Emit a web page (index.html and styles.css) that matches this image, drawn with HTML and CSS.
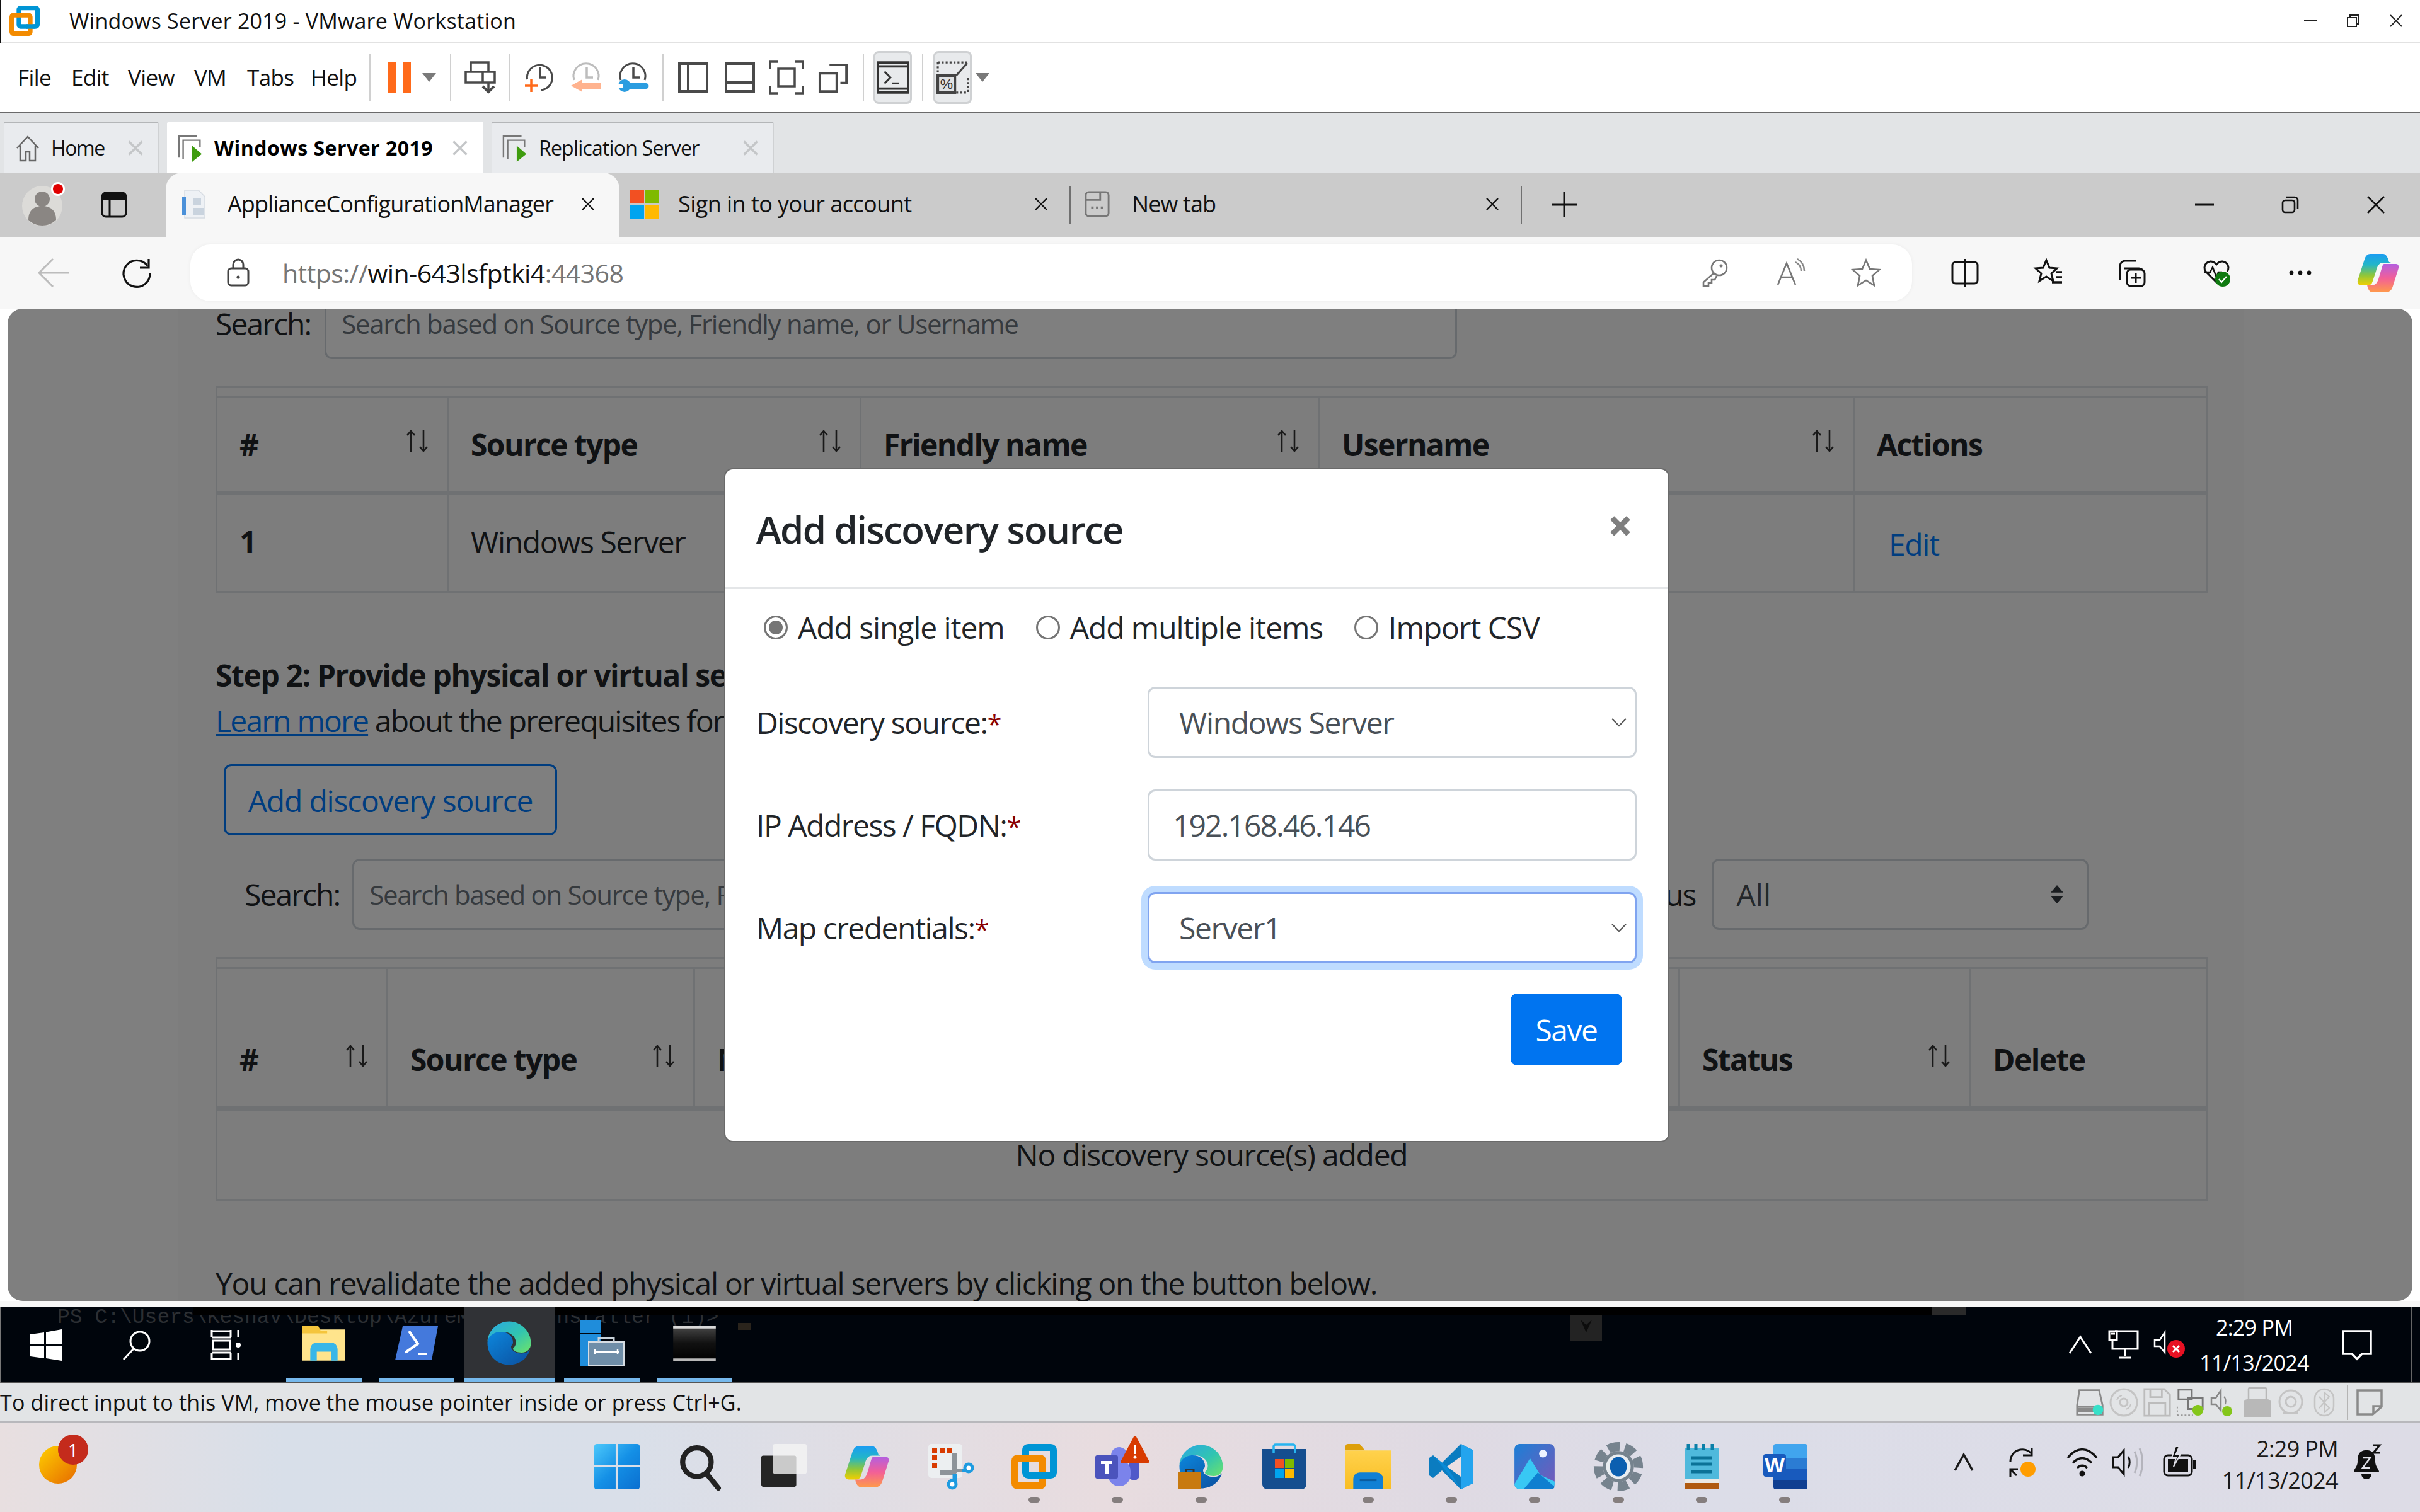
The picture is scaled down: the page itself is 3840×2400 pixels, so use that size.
FILE: index.html
```html
<!DOCTYPE html>
<html lang="en">
<head>
<meta charset="utf-8">
<title>Windows Server 2019 - VMware Workstation</title>
<link rel="stylesheet" href="styles.css">
</head>
<body>
<svg class="defs" aria-hidden="true">
  <defs>
    <linearGradient id="eTop" x1="0" y1="0" x2="1" y2="1"><stop offset="0" stop-color="#2aa7e4"/><stop offset=".55" stop-color="#31c5b0"/><stop offset="1" stop-color="#6de36a"/></linearGradient>
    <linearGradient id="eLow" x1="0" y1="0" x2="1" y2="1"><stop offset="0" stop-color="#0c86dc"/><stop offset="1" stop-color="#0b4f9e"/></linearGradient>
    <linearGradient id="cpL" x1="0" y1="0" x2="0" y2="1"><stop offset="0" stop-color="#1b9cf2"/><stop offset=".35" stop-color="#22b6c8"/><stop offset=".68" stop-color="#8fc63a"/><stop offset="1" stop-color="#f2cf00"/></linearGradient>
    <linearGradient id="cpR" x1="0" y1="0" x2="0" y2="1"><stop offset="0" stop-color="#b35fe0"/><stop offset=".5" stop-color="#f25f98"/><stop offset="1" stop-color="#ff9a4a"/></linearGradient>
    <linearGradient id="win" x1="0" y1="0" x2="1" y2="1"><stop offset="0" stop-color="#4cc8fb"/><stop offset=".5" stop-color="#1490e6"/><stop offset="1" stop-color="#0a6fd0"/></linearGradient>
    <linearGradient id="sun" x1="0" y1="0" x2="1" y2="1"><stop offset="0" stop-color="#ffd000"/><stop offset="1" stop-color="#e66a00"/></linearGradient>
    <linearGradient id="fold" x1="0" y1="0" x2="0" y2="1"><stop offset="0" stop-color="#ffd24d"/><stop offset="1" stop-color="#f9bd22"/></linearGradient>
    <linearGradient id="photo" x1="0" y1="0" x2="1" y2="1"><stop offset="0" stop-color="#1c7fd6"/><stop offset="1" stop-color="#7a58b8"/></linearGradient>
    <linearGradient id="term" x1="0" y1="0" x2="0" y2="1"><stop offset="0" stop-color="#4a4a4a"/><stop offset=".5" stop-color="#111"/><stop offset="1" stop-color="#000"/></linearGradient>
  </defs>
</svg>
<div class="app">

  <header class="vm-title">
    <svg class="ic-logo" viewBox="0 0 72 72"><rect x="22.500" y="5.500" width="44" height="44" rx="4" fill="none" stroke="#0095d5" stroke-width="11"/><rect x="5.500" y="22.500" width="44" height="44" rx="4" fill="none" stroke="#f38b00" stroke-width="11"/><path d="M40 49.500h20" stroke="#0095d5" stroke-width="11"/></svg>
    <span class="vm-title-text">Windows Server 2019 - VMware Workstation</span>
    <div class="win-ctl">
      <svg class="ic-ctl" viewBox="0 0 24 24"><path d="M2 12h20" stroke="#222" stroke-width="2"/></svg>
      <svg class="ic-ctl" viewBox="0 0 24 24"><path d="M3 7h14v14H3zM7 7V3h14v14h-4" fill="none" stroke="#222" stroke-width="2"/></svg>
      <svg class="ic-ctl" viewBox="0 0 24 24"><path d="M3 3l18 18M21 3L3 21" stroke="#222" stroke-width="2"/></svg>
    </div>
  </header>

  <nav class="vm-toolbar">
    <span>File</span><span>Edit</span><span>View</span><span>VM</span><span>Tabs</span><span>Help</span>
    <i class="tsep"></i>
    <svg class="ic-pause" viewBox="0 0 36 48"><path d="M0 0h12v48H0zM24 0h12v48H24z" fill="#ff6a1a"/></svg>
    <svg class="ic-caret" viewBox="0 0 22 14"><path d="M0 0h22L11 14z" fill="#7a7a7a"/></svg>
    <i class="tsep"></i>
    <svg class="ic-tb" viewBox="0 0 50 52"><path d="M9 2h28v15H9zM1 17h46v17H1zM28 17v17M37 34v12" fill="none" stroke="#4a4a4a" stroke-width="3.500"/><path d="M28 40l9 9 9-9" fill="none" stroke="#4a4a4a" stroke-width="4"/></svg>
    <i class="tsep"></i>
    <svg class="ic-tb" viewBox="0 0 50 52"><path d="M1.500 29A20 20 0 1 1 24 46" fill="none" stroke="#4a4a4a" stroke-width="3"/><path d="M22 10v16h10" fill="none" stroke="#4a4a4a" stroke-width="3.500"/><path d="M8 29v20M-2 39h20" stroke="#ff6a1a" stroke-width="3.500"/></svg>
    <svg class="ic-tb" viewBox="0 0 50 52"><path d="M6 30A20 20 0 1 1 44 30" fill="none" stroke="#bdbdbd" stroke-width="3"/><path d="M26 10v16h10" fill="none" stroke="#bdbdbd" stroke-width="3.500"/><path d="M1 39L19 29v6h30v9H19v5z" fill="#ffb38f"/></svg>
    <svg class="ic-tb" viewBox="0 0 50 52"><path d="M5 30A20 20 0 1 1 43 30" fill="none" stroke="#4a4a4a" stroke-width="3"/><path d="M25 10v16h10" fill="none" stroke="#4a4a4a" stroke-width="3.500"/><path d="M14 35h31a4.500 4.500 0 0 1 0 9H14z" fill="#2b9de0"/><circle cx="11" cy="39" r="10" fill="#2b9de0"/><path d="M0 36h8v6H0z" fill="#fff"/></svg>
    <i class="tsep"></i>
    <svg class="ic-lay" viewBox="0 0 48 48"><path d="M2 2h44v44H2zM16 2v44" fill="none" stroke="#4a4a4a" stroke-width="4"/></svg>
    <svg class="ic-lay" viewBox="0 0 48 48"><path d="M2 2h44v44H2zM2 32h44" fill="none" stroke="#4a4a4a" stroke-width="4"/></svg>
    <svg class="ic-layw" viewBox="0 0 56 54"><path d="M2 14V2h12M42 2h12v12M54 40v12H42M14 52H2V40" fill="none" stroke="#4a4a4a" stroke-width="3.500"/><rect x="15" y="13" width="26" height="28" fill="none" stroke="#4a4a4a" stroke-width="3.500"/></svg>
    <svg class="ic-lay" viewBox="0 0 48 50"><path d="M18 4h28v30H36" fill="none" stroke="#4a4a4a" stroke-width="4"/><path d="M2 18h28v30H2z" fill="none" stroke="#4a4a4a" stroke-width="4"/></svg>
    <i class="tsep"></i>
    <div class="tb-btn"><svg class="ic-tbin" viewBox="0 0 50 50"><path d="M2 2h46v46H2zM2 8h46M2 42h46" fill="none" stroke="#333" stroke-width="3.500"/><path d="M12 16l9 9-9 9" fill="none" stroke="#333" stroke-width="3"/><path d="M24 34h10" stroke="#333" stroke-width="3"/></svg></div>
    <i class="tsep"></i>
    <div class="tb-btn"><svg class="ic-tbin" viewBox="0 0 50 50"><path d="M2 2h46M2 2v18M48 26v22M30 48h18" fill="none" stroke="#444" stroke-width="3" stroke-dasharray="3 3"/><path d="M2 22h26v26H2z" fill="#dfe1e3" stroke="#444" stroke-width="4"/><path d="M30 22L47 3" stroke="#444" stroke-width="3"/><text x="15" y="42" class="pct">%</text></svg></div>
    <svg class="ic-caret" viewBox="0 0 22 14"><path d="M0 0h22L11 14z" fill="#7a7a7a"/></svg>
  </nav>

  <div class="vm-tabs">
    <div class="vm-tab t-home">
      <svg class="ic-tabi" viewBox="0 0 40 44"><path d="M3 22L20 4l17 18M8 18v24h9V28h6v14h9V18" fill="none" stroke="#666" stroke-width="2.500"/></svg>
      <span>Home</span><svg class="ic-tabx" viewBox="0 0 24 24"><path d="M3 3l18 18M21 3L3 21" stroke="#c4c6c8" stroke-width="3"/></svg>
    </div>
    <div class="vm-tab t-active">
      <svg class="ic-tabi" viewBox="0 0 44 44"><path d="M2 38V2h30" fill="none" stroke="#777" stroke-width="2.500"/><path d="M9 40V9h28v12" fill="none" stroke="#777" stroke-width="2.500"/><path d="M24 18l16 14-16 13z" fill="#3f9c0f"/></svg>
      <b>Windows Server 2019</b><svg class="ic-tabx" viewBox="0 0 24 24"><path d="M3 3l18 18M21 3L3 21" stroke="#c4c6c8" stroke-width="3"/></svg>
    </div>
    <div class="vm-tab t-rep">
      <svg class="ic-tabi" viewBox="0 0 44 44"><path d="M2 38V2h30" fill="none" stroke="#777" stroke-width="2.500"/><path d="M9 40V9h28v12" fill="none" stroke="#777" stroke-width="2.500"/><path d="M24 18l16 14-16 13z" fill="#3f9c0f"/></svg>
      <span>Replication Server</span><svg class="ic-tabx" viewBox="0 0 24 24"><path d="M3 3l18 18M21 3L3 21" stroke="#c4c6c8" stroke-width="3"/></svg>
    </div>
  </div>

  <div class="edge-tabs">
    <div class="avatar"><svg class="ic-avatar" viewBox="0 0 70 72"><circle cx="34" cy="38" r="32" fill="#dcdbd8"/><circle cx="34" cy="27" r="12" fill="#8a8683"/><path d="M12 60c0-16 10-22 22-22s22 6 22 22c-6 6-14 9-22 9s-16-3-22-9z" fill="#8a8683"/><circle cx="59" cy="11" r="11" fill="#fff"/><circle cx="59" cy="11" r="8" fill="#e00000"/></svg></div>
    <svg class="ic-vtabs" viewBox="0 0 42 42"><rect x="2" y="2" width="38" height="38" rx="6" fill="none" stroke="#111" stroke-width="3"/><path d="M2 14V8a6 6 0 0 1 6-6h26a6 6 0 0 1 6 6v6z" fill="#111"/><path d="M14 14v26" stroke="#111" stroke-width="3"/></svg>
    <div class="e-tab e-active">
      <svg class="ic-etab" viewBox="0 0 46 48"><path d="M8 2h22l10 10v34H8z" fill="#eef1f5" stroke="#d6dbe2" stroke-width="1.500"/><rect x="4" y="12" width="6" height="30" fill="#4a90d9"/><path d="M22 14h12v12H22zM22 30h16v12H22z" fill="#c9d3de"/></svg>
      <span class="e-label">ApplianceConfigurationManager</span>
      <svg class="ic-ex" viewBox="0 0 24 24"><path d="M3 3l18 18M21 3L3 21" stroke="#111" stroke-width="2.400"/></svg>
    </div>
    <div class="e-tab e-two">
      <svg class="ic-etab" viewBox="0 0 48 48"><path d="M0 0h23v23H0z" fill="#f25022"/><path d="M25 0h23v23H25z" fill="#7fba00"/><path d="M0 25h23v23H0z" fill="#00a4ef"/><path d="M25 25h23v23H25z" fill="#ffb900"/></svg>
      <span class="e-label">Sign in to your account</span>
      <svg class="ic-ex" viewBox="0 0 24 24"><path d="M3 3l18 18M21 3L3 21" stroke="#111" stroke-width="2.400"/></svg>
    </div>
    <i class="e-sep"></i>
    <div class="e-tab e-three">
      <svg class="ic-etab" viewBox="0 0 42 44"><rect x="2" y="2" width="38" height="40" rx="5" fill="none" stroke="#777" stroke-width="3"/><path d="M2 15h24V2" fill="none" stroke="#777" stroke-width="3"/><path d="M11 28h4M19 28h4M27 28h4" stroke="#777" stroke-width="4"/></svg>
      <span class="e-label">New tab</span>
      <svg class="ic-ex" viewBox="0 0 24 24"><path d="M3 3l18 18M21 3L3 21" stroke="#111" stroke-width="2.400"/></svg>
    </div>
    <i class="e-sep"></i>
    <svg class="ic-plus" viewBox="0 0 40 40"><path d="M20 0v40M0 20h40" stroke="#111" stroke-width="3"/></svg>
    <div class="e-ctl">
      <svg class="ic-ectl" viewBox="0 0 30 30"><path d="M0 15h30" stroke="#111" stroke-width="3"/></svg>
      <svg class="ic-ectl" viewBox="0 0 30 30"><rect x="3" y="8" width="19" height="19" rx="4" fill="none" stroke="#111" stroke-width="2.600"/><path d="M9 3h13a5 5 0 0 1 5 5v13" fill="none" stroke="#111" stroke-width="2.600"/></svg>
      <svg class="ic-ectl" viewBox="0 0 30 30"><path d="M2 2l26 26M28 2L2 28" stroke="#111" stroke-width="2.600"/></svg>
    </div>
  </div>

  <div class="edge-bar">
    <svg class="ic-back" viewBox="0 0 50 48"><path d="M2 24h48M24 2L2 24l22 22" fill="none" stroke="#bcbcbc" stroke-width="3"/></svg>
    <svg class="ic-refresh" viewBox="0 0 50 50"><path d="M42 14A21 21 0 1 0 46 26" fill="none" stroke="#111" stroke-width="3.200"/><path d="M44 3v14H30" fill="none" stroke="#111" stroke-width="3.200"/></svg>
    <div class="url-pill">
      <svg class="ic-lock" viewBox="0 0 36 44"><rect x="2" y="15" width="32" height="27" rx="5" fill="none" stroke="#444" stroke-width="3"/><path d="M10 15V9a8 8 0 0 1 16 0v6" fill="none" stroke="#444" stroke-width="3"/><circle cx="18" cy="29" r="2.600" fill="#444"/></svg>
      <span class="url"><span class="dim">https://</span>win-643lsfptki4<span class="dim">:44368</span></span>
      <div class="pill-icons">
        <svg class="ic-addr" viewBox="0 0 44 46"><circle cx="29" cy="15" r="12" fill="none" stroke="#777" stroke-width="2.600"/><circle cx="32" cy="12" r="2.500" fill="#777"/><path d="M20 24L4 38v6h8v-5h5v-5h5l3-6" fill="none" stroke="#777" stroke-width="2.600"/></svg>
        <svg class="ic-addr" viewBox="0 0 46 46"><path d="M3 42L17 8l14 34M8 30h18" fill="none" stroke="#777" stroke-width="2.600"/><path d="M31 6c6 3 9 8 9 14M34 1c7 4 11 11 11 19" fill="none" stroke="#888" stroke-width="2.500"/></svg>
        <svg class="ic-addr" viewBox="0 0 46 46"><path d="M23 3l6 14 15 1-11 10 3 15-13-8-13 8 3-15L2 18l15-1z" fill="none" stroke="#777" stroke-width="2.600"/></svg>
      </div>
    </div>
    <div class="bar-icons">
      <svg class="ic-bar" viewBox="0 0 46 46"><rect x="3" y="6" width="40" height="34" rx="5" fill="none" stroke="#111" stroke-width="3"/><path d="M23 1v44" stroke="#111" stroke-width="3"/></svg>
      <svg class="ic-bar" viewBox="0 0 46 46"><path d="M19 3l5 12 12 1-9 8 3 12-11-7-11 7 3-12-9-8 12-1z" fill="none" stroke="#111" stroke-width="3"/><path d="M34 22h10M34 30h10M28 38h16" stroke="#111" stroke-width="3.400"/></svg>
      <svg class="ic-bar" viewBox="0 0 46 46"><path d="M3 34V12a8 8 0 0 1 8-8h18" fill="none" stroke="#111" stroke-width="3"/><path d="M9 16h24a8 8 0 0 1 8 8" fill="none" stroke="#111" stroke-width="3"/><rect x="14" y="18" width="28" height="26" rx="6" fill="#f7f7f7" stroke="#111" stroke-width="3"/><path d="M28 23v16M20 31h16" stroke="#111" stroke-width="3"/></svg>
      <svg class="ic-bar" viewBox="0 0 46 46"><path d="M23 38L6 21a10 10 0 0 1 14-14l3 3 3-3a10 10 0 0 1 14 14" fill="none" stroke="#111" stroke-width="3"/><path d="M3 22h10l4-8 6 16 3-8h6" fill="none" stroke="#111" stroke-width="2.400"/><circle cx="33" cy="33" r="12" fill="#0f7a10"/><path d="M27 33l4 5 8-9" fill="none" stroke="#fff" stroke-width="2.400"/></svg>
      <svg class="ic-bar" viewBox="0 0 46 46"><circle cx="9" cy="23" r="3.400" fill="#111"/><circle cx="23" cy="23" r="3.400" fill="#111"/><circle cx="37" cy="23" r="3.400" fill="#111"/></svg>
      <svg class="ic-copilot" viewBox="0 0 72 67"><path d="M22 1H44c5 0 8 6 10 14 2 0 3 1 3 1H44C37 16 34 22 32 30l-6 18c-1 4-4 6-8 6H7c-5 0-7-4-6-8L13 9C15 4 18 1 22 1z" fill="url(#cpL)"/><path d="M46 18h20c3 0 5 3 4 7L60 57c-2 6-6 9-11 9H26c-5 0-8-6-9-12 3 0 6 0 8 0 6 0 9-4 11-10l6-20c1-4 2-6 4-6z" fill="url(#cpR)"/></svg>
    </div>
  </div>

  <main class="web">
    <div class="page">
      <div class="search-row">
        <label>Search:</label>
        <div class="fake-input w-a">Search based on Source type, Friendly name, or Username</div>
      </div>

      <div class="tw">
        <table class="dt dt-a">
          <colgroup><col class="a1"><col class="a2"><col class="a3"><col class="a4"><col class="a5"></colgroup>
          <thead><tr>
            <th><div class="thc"><span>#</span><svg class="ic-sort" viewBox="0 0 40 36"><path d="M9 35V3M3 9l6-7 6 7M29 1v32M23 27l6 7 6-7" fill="none" stroke="#333" stroke-width="2.600"/></svg></div></th>
            <th><div class="thc"><span>Source type</span><svg class="ic-sort" viewBox="0 0 40 36"><path d="M9 35V3M3 9l6-7 6 7M29 1v32M23 27l6 7 6-7" fill="none" stroke="#333" stroke-width="2.600"/></svg></div></th>
            <th><div class="thc"><span>Friendly name</span><svg class="ic-sort" viewBox="0 0 40 36"><path d="M9 35V3M3 9l6-7 6 7M29 1v32M23 27l6 7 6-7" fill="none" stroke="#333" stroke-width="2.600"/></svg></div></th>
            <th><div class="thc"><span>Username</span><svg class="ic-sort" viewBox="0 0 40 36"><path d="M9 35V3M3 9l6-7 6 7M29 1v32M23 27l6 7 6-7" fill="none" stroke="#333" stroke-width="2.600"/></svg></div></th>
            <th>Actions</th>
          </tr></thead>
          <tbody><tr><td><b>1</b></td><td>Windows Server</td><td></td><td></td><td><a class="edit" href="#">Edit</a></td></tr></tbody>
        </table>
      </div>

      <h2 class="step">Step 2: Provide physical or virtual server details</h2>
      <p class="learn"><a href="#">Learn more</a> about the prerequisites for adding discovery sources</p>
      <button class="btn-outline">Add discovery source</button>

      <div class="search-row row-b">
        <label>Search:</label>
        <div class="fake-input w-b">Search based on Source type, Friendly name</div>
        <label class="lb-status">Status</label>
        <div class="fake-input w-c"><span>All</span><svg class="ic-updown" viewBox="0 0 24 32"><path d="M12 0l11 13H1zM12 32L1 19h22z" fill="#343a40"/></svg></div>
      </div>

      <div class="tw">
        <table class="dt dt-b">
          <colgroup><col class="b1"><col class="b2"><col class="b3"><col class="b4"><col class="b5"><col class="b6"></colgroup>
          <thead><tr>
            <th><div class="thc"><span>#</span><svg class="ic-sort" viewBox="0 0 40 36"><path d="M9 35V3M3 9l6-7 6 7M29 1v32M23 27l6 7 6-7" fill="none" stroke="#333" stroke-width="2.600"/></svg></div></th>
            <th><div class="thc"><span>Source type</span><svg class="ic-sort" viewBox="0 0 40 36"><path d="M9 35V3M3 9l6-7 6 7M29 1v32M23 27l6 7 6-7" fill="none" stroke="#333" stroke-width="2.600"/></svg></div></th>
            <th><div class="thc"><span>Map</span></div></th>
            <th></th>
            <th><div class="thc"><span>Status</span><svg class="ic-sort" viewBox="0 0 40 36"><path d="M9 35V3M3 9l6-7 6 7M29 1v32M23 27l6 7 6-7" fill="none" stroke="#333" stroke-width="2.600"/></svg></div></th>
            <th>Delete</th>
          </tr></thead>
          <tbody><tr><td colspan="6" class="empty">No discovery source(s) added</td></tr></tbody>
        </table>
      </div>

      <p class="reval">You can revalidate the added physical or virtual servers by clicking on the button below.</p>
    </div>

    <div class="backdrop"></div>

    <section class="modal">
      <div class="m-head">
        <h5>Add discovery source</h5>
        <svg class="ic-close" viewBox="0 0 24 24"><path d="M3 3l18 18M21 3L3 21" stroke="#7f7f7f" stroke-width="6"/></svg>
      </div>
      <div class="m-body">
        <div class="radios">
          <span class="radio on"></span><span class="r-l">Add single item</span>
          <span class="radio"></span><span class="r-l">Add multiple items</span>
          <span class="radio"></span><span class="r-l">Import CSV</span>
        </div>
        <div class="f-row"><span class="f-lab">Discovery source:<em>*</em></span><div class="f-ctl sel">Windows Server<svg class="ic-chev" viewBox="0 0 24 14"><path d="M1 1l11 11L23 1" fill="none" stroke="#555" stroke-width="2"/></svg></div></div>
        <div class="f-row"><span class="f-lab">IP Address / FQDN:<em>*</em></span><div class="f-ctl inp">192.168.46.146</div></div>
        <div class="f-row"><span class="f-lab">Map credentials:<em>*</em></span><div class="f-ctl sel focus">Server1<svg class="ic-chev" viewBox="0 0 24 14"><path d="M1 1l11 11L23 1" fill="none" stroke="#555" stroke-width="2"/></svg></div></div>
        <div class="m-foot"><button class="btn-save">Save</button></div>
      </div>
    </section>
  </main>

  <div class="gap-band"></div>

  <div class="vm-taskbar">
    <div class="ghost">PS C:\Users\Keshav\Desktop\AzureMigrateInstaller (1)&gt;</div>
    <i class="vt-band"></i>
    <i class="ghost-cur"></i>
    <div class="vt-scroll"><svg class="ic-sc" viewBox="0 0 20 20"><path d="M1 0l9 8 9-8-9 20z" fill="#0c0c0c"/></svg></div>
    <i class="vt-top"></i>
    <i class="vt-edge"></i>
    <svg class="vt-win" viewBox="0 0 50 50"><path d="M0 8l22-3v19H0zM25 4.500L50 0v24H25zM0 27h22v19L0 43zM25 27h25v23l-25-4z" fill="#fff"/></svg>
    <svg class="vt-search" viewBox="0 0 48 48"><circle cx="29" cy="18" r="15" fill="none" stroke="#fff" stroke-width="3"/><path d="M19 30L3 47" stroke="#fff" stroke-width="3"/></svg>
    <svg class="vt-view" viewBox="0 0 48 48"><path d="M0 2h30M0 12h30M0 36h30M0 46h30M0 36v12M30 36v12M0 0v12M30 0v12" stroke="#fff" stroke-width="3" fill="none"/><rect x="1.500" y="17" width="27" height="14" fill="none" stroke="#fff" stroke-width="3"/><path d="M42 0v12M42 36v12" stroke="#fff" stroke-width="3"/><circle cx="42" cy="24" r="4" fill="#fff"/></svg>
    <div class="vt-app"><svg class="ic-vt" viewBox="0 0 66 54"><path d="M0 6h66v48H0z" fill="#ffe48c"/><path d="M0 0h24l4 8h10v4H0z" fill="#f5c53c"/><path d="M12 54V36a10 10 0 0 1 10-10h22a10 10 0 0 1 10 10v18H44V40H22v14z" fill="#38b6e8"/></svg></div>
    <div class="vt-app"><svg class="ic-vt" viewBox="0 0 68 54"><path d="M12 0h56L58 54H0z" fill="#4479dc"/><path d="M22 8l14 20-20 14" fill="none" stroke="#fff" stroke-width="4"/><path d="M36 42h14v4H36z" fill="#fff"/></svg></div>
    <div class="vt-app vt-on"><svg class="ic-edge" viewBox="0 0 48 48"><path d="M24 1C36 1 47 11 47 24c0 6-4 10-10 10-5 0-9-2-9-4 0-1 3-2 3-7 0-6-6-11-14-11C9 12 3 17 1 22 2 10 12 1 24 1z" fill="url(#eTop)"/><path d="M1 24c0-7 7-12 14-12 8 0 13 5 13 11 0 3-2 3-2 5 0 4 6 7 11 7 4 0 7-2 9-4-3 10-12 16-22 16C11 47 1 37 1 24z" fill="url(#eLow)"/></svg></div>
    <div class="vt-app"><svg class="ic-vt ic-sm" viewBox="0 0 70 72"><path d="M0 0h34v20H0zM0 22h34v50H0z" fill="#1f8ddb"/><rect x="14" y="34" width="56" height="38" fill="#6f8ea8" stroke="#d6dde3" stroke-width="2"/><path d="M30 34v-6h24v6" fill="none" stroke="#c8d2da" stroke-width="3"/><path d="M22 50h40M24 46v8M60 46v8" stroke="#fff" stroke-width="2.500"/></svg></div>
    <div class="vt-app"><svg class="ic-vt" viewBox="0 0 70 58"><rect width="70" height="58" fill="url(#term)"/><path d="M0 0h70v5H0z" fill="#d8d8d8"/><path d="M0 54h70v4H0z" fill="#b8b8b8"/></svg></div>
    <div class="vt-tray">
      <svg class="ic-vcaret" viewBox="0 0 38 30"><path d="M2 28L19 2l17 26" fill="none" stroke="#fff" stroke-width="3"/></svg>
      <svg class="ic-vnet" viewBox="0 0 48 48"><path d="M10 2h36v28H6V14" fill="none" stroke="#fff" stroke-width="3"/><path d="M1 2h12v14H1z" fill="#000" stroke="#fff" stroke-width="3"/><path d="M4 6h6" stroke="#fff" stroke-width="3"/><path d="M26 30v12M16 44h20" stroke="#fff" stroke-width="3"/></svg>
      <svg class="ic-vsnd" viewBox="0 0 50 48"><path d="M2 16h8L18 4v32l-8-10H2z" fill="none" stroke="#fff" stroke-width="2.500"/><circle cx="36" cy="30" r="14" fill="#e81123"/><path d="M31 25l10 10M41 25L31 35" stroke="#fff" stroke-width="3"/></svg>
      <div class="clock clock-w"><span>2:29 PM</span><span>11/13/2024</span></div>
      <svg class="ic-vnote" viewBox="0 0 48 48"><path d="M2 2h44v36H32l-8 8-8-8H2z" fill="none" stroke="#fff" stroke-width="3.500"/></svg>
    </div>
  </div>

  <footer class="vm-status">
    <span class="status-text">To direct input to this VM, move the mouse pointer inside or press Ctrl+G.</span>
    <div class="status-icons">
      <svg class="ic-st" viewBox="0 0 50 46"><path d="M6 2h34l6 26v16H2V28z" fill="none" stroke="#8a8a8a" stroke-width="3"/><path d="M2 30h44" stroke="#8a8a8a" stroke-width="3"/><path d="M4 32h28v8H4z" fill="#8a8a8a"/><circle cx="38" cy="36" r="9" fill="#37e0c8"/></svg>
      <svg class="ic-st" viewBox="0 0 46 46"><circle cx="23" cy="23" r="21" fill="none" stroke="#c4c4c4" stroke-width="3"/><circle cx="23" cy="23" r="6" fill="none" stroke="#c4c4c4" stroke-width="3"/><path d="M12 20a11 11 0 0 1 8-8M34 26a11 11 0 0 1-8 8" fill="none" stroke="#c4c4c4" stroke-width="2"/></svg>
      <svg class="ic-st" viewBox="0 0 48 50"><path d="M2 2h34l10 10v36H2z" fill="none" stroke="#bcbcbc" stroke-width="3"/><path d="M12 2v14h20V2M10 48V26h28v22" fill="none" stroke="#bcbcbc" stroke-width="3"/></svg>
      <svg class="ic-st" viewBox="0 0 48 46"><path d="M4 2h22v16H4zM20 16h24v18H20z" fill="#e2e4e6" stroke="#777" stroke-width="3"/><path d="M2 44h26M2 30v14" stroke="#999" stroke-width="2" stroke-dasharray="3 3"/><circle cx="36" cy="36" r="9" fill="#84c61a"/></svg>
      <svg class="ic-st" viewBox="0 0 44 46"><path d="M2 16h7l8-12v32l-8-10H2z" fill="none" stroke="#888" stroke-width="2.500"/><path d="M22 14c3 3 3 8 2 12" fill="none" stroke="#888" stroke-width="2"/><circle cx="27" cy="37" r="8" fill="#84c61a"/></svg>
      <svg class="ic-st" viewBox="0 0 44 46"><rect x="8" y="0" width="28" height="22" rx="2" fill="none" stroke="#b8b8b8" stroke-width="2.500"/><path d="M0 24a6 6 0 0 1 6-6h32a6 6 0 0 1 6 6v22H0z" fill="#b8b8b8"/></svg>
      <svg class="ic-st" viewBox="0 0 40 46"><circle cx="20" cy="22" r="18" fill="none" stroke="#c4c4c4" stroke-width="3"/><circle cx="20" cy="22" r="8" fill="none" stroke="#c4c4c4" stroke-width="3"/><path d="M8 40h24" stroke="#c4c4c4" stroke-width="3"/></svg>
      <svg class="ic-st" viewBox="0 0 34 46"><rect x="2" y="2" width="30" height="42" rx="15" fill="none" stroke="#c4c4c4" stroke-width="2.500"/><path d="M9 14l16 18-8 7V7l8 7L9 32" fill="none" stroke="#c4c4c4" stroke-width="2"/></svg>
      <i class="st-sep"></i>
      <svg class="ic-note" viewBox="0 0 42 42"><path d="M2 2h38v26L26 40H2z" fill="none" stroke="#8a8a8a" stroke-width="3.500"/><path d="M40 27H27v13" fill="none" stroke="#8a8a8a" stroke-width="3.500"/></svg>
    </div>
  </footer>

  <div class="host-taskbar">
    <div class="weather"><svg class="ic-sun" viewBox="0 0 80 82"><circle cx="30" cy="52" r="30" fill="url(#sun)"/></svg><span class="badge">1</span></div>
    <div class="h-app"><svg class="ic-host" viewBox="0 0 70 70"><path d="M0 4a4 4 0 0 1 4-4h29v33H0zM36 0h30a4 4 0 0 1 4 4v29H36zM0 36h33v34H4a4 4 0 0 1-4-4zM36 36h34v30a4 4 0 0 1-4 4H36z" fill="url(#win)"/></svg></div>
    <div class="h-app"><svg class="ic-host" viewBox="0 0 70 70"><circle cx="29" cy="28" r="22" fill="none" stroke="#222" stroke-width="8"/><path d="M44 46l18 22" stroke="#222" stroke-width="8" stroke-linecap="round"/></svg></div>
    <div class="h-app"><svg class="ic-host" viewBox="0 0 70 70"><rect x="0" y="18" width="54" height="48" rx="3" fill="#252525"/><rect x="18" y="0" width="52" height="46" rx="3" fill="#f4f4f4" fill-opacity=".8"/></svg></div>
    <div class="h-app"><svg class="ic-host" viewBox="0 0 72 67"><path d="M22 1H44c5 0 8 6 10 14 2 0 3 1 3 1H44C37 16 34 22 32 30l-6 18c-1 4-4 6-8 6H7c-5 0-7-4-6-8L13 9C15 4 18 1 22 1z" fill="url(#cpL)"/><path d="M46 18h20c3 0 5 3 4 7L60 57c-2 6-6 9-11 9H26c-5 0-8-6-9-12 3 0 6 0 8 0 6 0 9-4 11-10l6-20c1-4 2-6 4-6z" fill="url(#cpR)"/></svg></div>
    <div class="h-app"><svg class="ic-host" viewBox="0 0 72 72"><rect width="54" height="54" rx="5" fill="#eceff1"/><path d="M6 6h8v9H6zM18 6h8v9h-8zM30 6h8v9h-8zM6 18h8v8H6zM6 30h8v8H6z" fill="#d83b01"/><path d="M42 14v28a4 4 0 0 1-4 4H18" fill="none" stroke="#8d949a" stroke-width="8"/><path d="M38 42h22" stroke="#8d949a" stroke-width="6"/><path d="M42 48v12" stroke="#1e9be0" stroke-width="7"/><path d="M54 42h6" stroke="#1e9be0" stroke-width="6"/><circle cx="64" cy="38" r="6" fill="#fff" stroke="#1e9be0" stroke-width="5"/><circle cx="38" cy="64" r="6" fill="#fff" stroke="#1e9be0" stroke-width="5"/></svg></div>
    <div class="h-app dot"><svg class="ic-host" viewBox="0 0 72 72"><rect x="22.500" y="5.500" width="44" height="44" rx="4" fill="none" stroke="#0095d5" stroke-width="11"/><rect x="5.500" y="22.500" width="44" height="44" rx="4" fill="none" stroke="#f38b00" stroke-width="11"/><path d="M40 49.500h20" stroke="#0095d5" stroke-width="11"/></svg></div>
    <div class="h-app dot"><svg class="ic-teams" viewBox="0 0 86 80"><rect x="53" y="24" width="17" height="47" rx="8.500" fill="#5059c9"/><circle cx="38" cy="31" r="13" fill="#7b83eb"/><rect x="20" y="38" width="36" height="42" rx="18" fill="#7b83eb"/><rect y="31" width="36" height="37" rx="3" fill="#4b53bc"/><path d="M9 40h18v5h-6v15h-6V45H9z" fill="#fff"/><path d="M63 3L83 41H43z" fill="#d83b01" stroke="#d83b01" stroke-width="5" stroke-linejoin="round"/><path d="M61 14h4v15h-4z" fill="#fff"/><circle cx="63" cy="34" r="2.500" fill="#fff"/></svg></div>
    <div class="h-app dot"><svg class="ic-host" viewBox="0 0 48 48"><path d="M24 1C36 1 47 11 47 24c0 6-4 10-10 10-5 0-9-2-9-4 0-1 3-2 3-7 0-6-6-11-14-11C9 12 3 17 1 22 2 10 12 1 24 1z" fill="url(#eTop)"/><path d="M1 24c0-7 7-12 14-12 8 0 13 5 13 11 0 3-2 3-2 5 0 4 6 7 11 7 4 0 7-2 9-4-3 10-12 16-22 16C11 47 1 37 1 24z" fill="url(#eLow)"/><path d="M0 30h24v18H0z" fill="#c87a10"/><path d="M8 30v-3h8v3" fill="none" stroke="#333" stroke-width="2"/></svg></div>
    <div class="h-app"><svg class="ic-host" viewBox="0 0 70 72"><path d="M0 8h70v56a8 8 0 0 1-8 8H8a8 8 0 0 1-8-8z" fill="#154e8f"/><path d="M18 14V4a3 3 0 0 1 3-3h28a3 3 0 0 1 3 3v10" fill="none" stroke="#27b4ef" stroke-width="3.500"/><path d="M20 24h14v14H20z" fill="#f25022"/><path d="M36 24h14v14H36z" fill="#7fba00"/><path d="M20 40h14v14H20z" fill="#00a4ef"/><path d="M36 40h14v14H36z" fill="#ffb900"/></svg></div>
    <div class="h-app dot"><svg class="ic-host" viewBox="0 0 70 70"><path d="M0 4a4 4 0 0 1 4-4h18l8 10H0z" fill="#dd9f0a"/><path d="M0 10h70v60H0z" fill="url(#fold)"/><path d="M12 70V54a10 10 0 0 1 10-10h26a10 10 0 0 1 10 10v16z" fill="#1180d4"/><path d="M22 56h26" stroke="#0b5ca0" stroke-width="3"/></svg></div>
    <div class="h-app dot"><svg class="ic-host" viewBox="0 0 70 72"><path d="M50 0l20 10v52L50 72 20 42 6 54 0 50V22l6-4 14 12z" fill="#0b7cc0"/><path d="M50 0l20 10v52L50 72z" fill="#23a4ee"/><path d="M50 20v32L28 36z" fill="#eadfe2"/><path d="M6 18l44 54-22-36z" fill="#0a8ad6"/></svg></div>
    <div class="h-app dot"><svg class="ic-host" viewBox="0 0 62 70"><rect width="62" height="70" rx="8" fill="url(#photo)"/><circle cx="44" cy="15" r="6" fill="#eef4ff"/><path d="M0 62l24-40 16 26 22 10v4a8 8 0 0 1-8 8H8a8 8 0 0 1-8-8z" fill="#38c8f4"/><path d="M14 70l22-26 26 22a6 6 0 0 1-6 4z" fill="#0f7fd0"/></svg></div>
    <div class="h-app dot"><svg class="ic-host" viewBox="0 0 70 70"><path d="M35 4a31 31 0 1 0 .001 0z" fill="none" stroke="#76838e" stroke-width="14" stroke-dasharray="16 8"/><circle cx="35" cy="35" r="24" fill="#76838e"/><circle cx="35" cy="35" r="19" fill="#e9edf1"/><ellipse cx="35" cy="35" rx="13" ry="15" fill="#0b5fb0"/></svg></div>
    <div class="h-app dot"><svg class="ic-host" viewBox="0 0 54 72"><path d="M0 6h54v54H0z" fill="#4fb9dc"/><path d="M0 56h54v6H0z" fill="#ece9e4"/><path d="M0 62h54v10H0z" fill="#b05a10"/><path d="M6 0v10M18 0v10M30 0v10M44 0v10" stroke="#0b7fa8" stroke-width="5"/><path d="M10 22h34M10 32h34M10 44h34" stroke="#0b7297" stroke-width="5" /></svg></div>
    <div class="h-app dot"><svg class="ic-host" viewBox="0 0 70 72"><path d="M16 4a4 4 0 0 1 4-4h46a4 4 0 0 1 4 4v18H16z" fill="#41a5ee"/><path d="M16 22h54v18H16z" fill="#2b7cd3"/><path d="M16 40h54v18H16z" fill="#185abd"/><path d="M16 58h54v10a4 4 0 0 1-4 4H20a4 4 0 0 1-4-4z" fill="#103f91"/><rect y="16" width="36" height="36" rx="4" fill="#185abd"/><text x="18" y="45" class="w-text">W</text></svg></div>
    <div class="h-tray">
      <svg class="ic-hcaret" viewBox="0 0 32 30"><path d="M2 28L16 3l14 25" fill="none" stroke="#1a1a1a" stroke-width="3.500"/></svg>
      <svg class="ic-hsync" viewBox="0 0 48 50"><path d="M6 24a19 19 0 0 1 34-12M40 2v12H26" fill="none" stroke="#111" stroke-width="3"/><path d="M6 48V36h12M6 36l10 10" fill="none" stroke="#111" stroke-width="3"/><circle cx="34" cy="36" r="12" fill="#ff9d00"/></svg>
      <svg class="ic-hwifi" viewBox="0 0 50 46"><path d="M2 16c14-18 32-18 46 0M10 24c10-10 20-10 30 0M17 32c5-5 11-5 16 0" fill="none" stroke="#111" stroke-width="3.500"/><circle cx="25" cy="41" r="4.500" fill="#111"/></svg>
      <svg class="ic-hsnd" viewBox="0 0 50 46"><path d="M2 15h8l9-11v38l-9-11H2z" fill="none" stroke="#111" stroke-width="3"/><path d="M26 14c3 5 3 13 0 18" fill="none" stroke="#111" stroke-width="3"/><path d="M36 6c5 10 5 24 0 34M44 1c6 12 6 32 0 44" fill="none" stroke="#b4b4bc" stroke-width="3"/></svg>
      <svg class="ic-hbat" viewBox="0 0 54 50"><rect x="2" y="14" width="44" height="32" rx="6" fill="none" stroke="#111" stroke-width="3"/><path d="M8 20h32v20H8z" fill="#111"/><path d="M48 22h5v14h-5z" fill="#111"/><path d="M20 0l-6 18h7l-4 14 11-20h-7l5-12z" fill="#111" stroke="#e0e0e8" stroke-width="2"/></svg>
      <div class="clock clock-d"><span>2:29 PM</span><span>11/13/2024</span></div>
      <svg class="ic-hbell" viewBox="0 0 44 62"><path d="M22 12C10 12 8 20 8 30c0 8-6 12-6 16h40c0-4-6-8-6-16 0-10-2-18-14-18z" fill="#111"/><path d="M14 50a8 8 0 0 0 16 0z" fill="#111"/><path d="M16 24h12L16 40h12" fill="none" stroke="#e0e0e8" stroke-width="2.500"/><path d="M33 4h10L33 16h10" fill="none" stroke="#111" stroke-width="3"/></svg>
    </div>
  </div>
</div>
</body>
</html>
```
FILE: styles.css
```css
* { box-sizing: border-box; }
html, body { margin: 0; padding: 0; background: #fff; }
body { font-family: "Open Sans", "Noto Sans", sans-serif; color: #111; }
.defs { position: absolute; width: 0; height: 0; }
.app { width: 3840px; height: 2400px; display: flex; flex-direction: column; overflow: hidden; }
svg { display: block; flex: none; overflow: visible; }
i { display: block; font-style: normal; }

/* VMware title */
.vm-title { height: 69px; display: flex; align-items: center; padding-left: 13px; border-left: 2px solid #111; border-bottom: 2px solid #e2e2e2; background: #fff; }
.ic-logo { width: 48px; height: 48px; }
.vm-title-text { margin-left: 47px; font-size: 34px; letter-spacing: .2px; color: #111; }
.win-ctl { margin-left: auto; display: flex; align-items: center; gap: 44px; padding-right: 26px; }
.ic-ctl { width: 24px; height: 24px; }

/* VMware toolbar */
.vm-toolbar { height: 110px; display: grid; grid-template-columns: 85px 90px 105px 84px 101px 93px 30px 54px 44px 24px 70px 27px 70px 75px 71px 25px 74px 70px 78px 71px 17px 77px 18px 67px auto; justify-items: start; align-items: center; padding-left: 28px; border-bottom: 2px solid #6a6a6a; background: #fff; font-size: 35px; letter-spacing: -.6px; }
.tsep { width: 2px; height: 76px; background: #d0d0d0; }
.ic-pause { width: 36px; height: 48px; }
.ic-caret { width: 22px; height: 14px; }
.ic-tb { width: 50px; height: 52px; }
.ic-lay { width: 48px; height: 48px; }
.ic-layw { width: 56px; height: 54px; }
.tb-btn { width: 61px; height: 84px; display: flex; align-items: center; justify-content: center; background: #e8eaec; border: 3px solid #cfd1d3; border-radius: 8px; }
.ic-tbin { width: 54px; height: 52px; }
.pct { font: 22px "Liberation Sans", sans-serif; fill: #333; text-anchor: middle; }

/* VMware tabs */
.vm-tabs { height: 96px; display: flex; align-items: flex-end; padding-left: 6px; gap: 13px; background: #e2e4e6; font-size: 32px; letter-spacing: -.8px; }
.vm-tab { height: 81px; display: flex; align-items: center; padding: 0 22px 0 16px; background: #e9ebee; border-top: 2px solid #b4b6b8; border-left: 1px solid #cfd1d3; border-right: 1px solid #cfd1d3; border-radius: 4px 4px 0 0; }
.t-home { width: 246px; }
.t-active { width: 502px; background: #fff; border-color: #fff; }
.t-rep { width: 448px; }
.ic-tabi { width: 42px; height: 44px; margin-right: 16px; }
.t-active b { font-weight: 700; color: #000; letter-spacing: .5px; }
.t-home span { letter-spacing: -1.4px; }
.ic-tabx { width: 28px; height: 28px; margin-left: auto; }

/* Edge tabs */
.edge-tabs { height: 102px; display: flex; align-items: center; background: #cbcbcb; padding-left: 33px; font-size: 36px; letter-spacing: -.9px; }
.ic-avatar { width: 70px; height: 72px; }
.ic-vtabs { width: 42px; height: 42px; margin-left: 57px; margin-right: 61px; }
.e-tab { display: flex; align-items: center; height: 102px; padding-bottom: 3px; }
.e-active { width: 720px; background: #f7f7f7; border-radius: 26px 26px 0 0; padding-left: 22px; padding-right: 38px; }
.e-two { width: 714px; padding-left: 17px; padding-right: 33px; letter-spacing: -.55px; }
.e-three { width: 714px; padding-left: 22px; padding-right: 33px; }
.e-two .ic-etab { margin-right: 30px; }
.ic-etab { width: 46px; height: 48px; margin-right: 30px; }
.e-three .ic-etab { width: 40px; height: 44px; margin-right: 35px; }
.ic-ex { width: 24px; height: 24px; margin-left: auto; }
.e-sep { width: 2px; height: 60px; background: #707070; }
.ic-plus { width: 40px; height: 40px; margin-left: 47px; }
.e-ctl { margin-left: auto; display: flex; gap: 106px; padding-right: 55px; align-items: center; }
.ic-ectl { width: 30px; height: 30px; }

/* Edge address bar */
.edge-bar { height: 114px; display: flex; align-items: flex-start; background: #f7f7f7; padding-left: 60px; padding-top: 12px; }
.ic-back { width: 50px; height: 48px; margin-top: 21px; }
.ic-refresh { width: 50px; height: 50px; margin-top: 20px; margin-left: 82px; }
.url-pill { width: 2732px; height: 90px; margin-left: 60px; background: #fff; border-radius: 32px; display: flex; align-items: center; padding-left: 58px; padding-right: 50px; box-shadow: 0 0 6px rgba(0,0,0,.05); }
.ic-lock { width: 36px; height: 44px; }
.url { margin-left: 52px; font-size: 41px; letter-spacing: -.55px; color: #111; }
.dim { color: #767676; }
.pill-icons { margin-left: auto; display: flex; gap: 74px; }
.ic-addr { width: 46px; height: 46px; }
.bar-icons { display: flex; align-items: center; height: 90px; margin-left: 61px; gap: 87px; }
.ic-bar { width: 46px; height: 46px; }
.ic-copilot { width: 68px; height: 63px; margin-left: -20px; }

/* Web content */
.web { position: relative; flex: none; height: 1575px; margin: 0 12px; border-radius: 24px; overflow: hidden; background: #fff; }
.page { margin: -33px 0 0 271px; padding-left: 59px; width: 3277px; height: 1610px; background: #fafafa; font-size: 48px; letter-spacing: -1.25px; line-height: 72px; color: #212529; }
.search-row { display: flex; align-items: center; height: 113px; }
.search-row label { margin-right: 22px; letter-spacing: -1.9px; }
.fake-input { height: 113px; display: flex; align-items: center; border: 3px solid #ced4da; border-radius: 12px; padding-left: 24px; color: #6c757d; background: #fff; overflow: hidden; white-space: nowrap; font-size: 42px; letter-spacing: -1.3px; }
.w-a { width: 1797px; }
.row-b { margin-top: 37px; padding-left: 46px; }
.row-b label { margin-right: 20px; }
.w-b { width: 1900px; }
.row-b .lb-status { margin: 0 26px 0 103px; }
.w-c { width: 598px; color: #495057; padding-right: 36px; justify-content: space-between; padding-left: 36px; font-size: 48px; letter-spacing: 0; }
.ic-updown { width: 22px; height: 29px; }

.tw { margin-top: 43px; width: 3161px; border: 3px solid #dee2e6; padding-top: 13px; }
.dt { width: 100%; table-layout: fixed; border-collapse: separate; border-spacing: 0; border-top: 3px solid #dee2e6; }
.dt th { font-weight: 700; text-align: left; color: #212529; border-right: 3px solid #dee2e6; border-bottom: 7px solid #dee2e6; padding: 0 26px 0 35px; white-space: nowrap; overflow: hidden; letter-spacing: -1.6px; }
.dt td { border-right: 3px solid #dee2e6; padding: 0 35px 4px; white-space: nowrap; overflow: hidden; letter-spacing: -1.4px; }
.dt th:last-child, .dt td:last-child { border-right: 0; }
.thc { display: flex; justify-content: space-between; align-items: center; }
.ic-sort { width: 40px; height: 36px; margin-top: -12px; }
.dt-a th { height: 154px; }
.dt-a td { height: 152px; }
.a1 { width: 367px; } .a2 { width: 655px; } .a3 { width: 727px; } .a4 { width: 849px; } .a5 { width: 557px; }
.edit { color: #007bff; text-decoration: none; display: inline-block; margin: 8px 0 0 19px; }
.dt-b th { height: 225px; vertical-align: bottom; padding-bottom: 38px; }
.dt-b td { height: 140px; }
.b1 { width: 271px; } .b2 { width: 487px; } .b3 { width: 700px; } .b4 { width: 863px; } .b5 { width: 461px; } .b6 { width: 373px; }
.dt .empty { text-align: center; letter-spacing: -1.25px; padding: 0; }

.step { margin: 95px 0 0; font-size: 48px; line-height: 72px; font-weight: 700; letter-spacing: -1.4px; color: #212529; white-space: nowrap; }
.learn { margin: 0; white-space: nowrap; letter-spacing: -1.8px; }
.learn a { color: #007bff; }
.btn-outline { display: block; margin: 33px 0 0 13px; width: 529px; height: 113px; padding: 2px 0 0; font: inherit; letter-spacing: -1.2px; color: #007bff; background: #fff; border: 3px solid #007bff; border-radius: 12px; }
.reval { margin: 95px 0 0; white-space: nowrap; }

.backdrop { position: absolute; inset: 0; background: rgba(0,0,0,.5); }

/* Modal */
.modal { position: absolute; left: 1137px; top: 253px; width: 1500px; height: 1070px; background: #fff; border-radius: 14px; border: 2px solid #6a6a6a; color: #212529; font-size: 48px; letter-spacing: -1.5px; }
.m-head { height: 190px; display: flex; align-items: center; padding: 2px 49px 0; border-bottom: 3px solid #e4e6e8; }
.m-head h5 { margin: 0; font-size: 60px; font-weight: 600; letter-spacing: -1.6px; }
.ic-close { width: 34px; height: 34px; margin-left: auto; margin-right: 10px; margin-top: -10px; }
.m-body { padding: 0 49px; }
.radios { height: 124px; display: flex; align-items: center; padding: 0 0 3px 12px; margin-bottom: 31px; }
.radio { width: 38px; height: 38px; border-radius: 50%; border: 3px solid #767676; flex: none; margin-right: 16px; background: #fff; }
.radio.on { background: #767676; box-shadow: inset 0 0 0 5px #fff; }
.r-l { margin-right: 50px; letter-spacing: -1.1px; }
.f-row { display: flex; align-items: center; height: 113px; margin-bottom: 50px; }
.f-lab { width: 621px; flex: none; }
.f-lab em { color: #8b0000; font-style: normal; font-size: 42px; }
.f-ctl { width: 776px; height: 113px; display: flex; align-items: center; border: 3px solid #ced4da; border-radius: 12px; color: #495057; background: #fff; letter-spacing: -1.4px; }
.sel { padding-left: 47px; }
.inp { padding-left: 37px; letter-spacing: -1.9px; }
.focus { border-color: #80a4f0; box-shadow: 0 0 0 10px #bfdcff; }
.ic-chev { width: 24px; height: 14px; margin-left: auto; margin-right: 13px; }
.m-foot { display: flex; justify-content: flex-end; margin-top: -2px; padding-right: 24px; }
.btn-save { width: 177px; height: 114px; border: 0; padding: 0; border-radius: 10px; background: #0074f0; color: #fff; font: inherit; letter-spacing: inherit; }

.gap-band { height: 10px; background: #f7f7f7; }

/* VM taskbar */
.vm-taskbar { position: relative; height: 121px; background: #00050c; border-bottom: 2px solid #555; border-left: 1px solid #777; display: grid; grid-template-columns: 145px 143px 118px 147px 135px 159px 147px 120px 1fr; padding-left: 47px; align-items: center; justify-items: start; }
.ghost { position: absolute; left: 90px; top: -3px; color: #2c2f33; font: 33px/40px "Liberation Mono", monospace; white-space: nowrap; }
.vt-band { position: absolute; left: 305px; top: 0; width: 2760px; height: 12px; background: #000; }
.ghost-cur { position: absolute; left: 1170px; top: 25px; width: 21px; height: 11px; background: #2a241c; }
.vt-scroll { position: absolute; left: 2490px; top: 12px; width: 51px; height: 42px; background: #232323; display: flex; justify-content: center; padding-top: 8px; }
.ic-sc { width: 20px; height: 20px; }
.vt-top { position: absolute; left: 3065px; top: 0; width: 53px; height: 12px; background: #2a2a2a; }
.vt-edge { position: absolute; left: 3824px; top: 0; width: 3px; height: 119px; background: #666; }
.vt-win { width: 50px; height: 50px; }
.vt-search { width: 48px; height: 48px; }
.vt-view { width: 48px; height: 48px; }
.vt-app { width: 120px; height: 119px; display: flex; align-items: center; justify-content: center; border-bottom: 6px solid #76b9ed; position: relative; }
.vt-on { width: 144px; background: #303236; }
.ic-vt { width: 68px; height: 56px; }
.ic-sm { width: 70px; height: 72px; }
.ic-edge { width: 72px; height: 72px; }
.vt-tray { justify-self: end; height: 119px; display: flex; align-items: center; padding-right: 76px; }
.ic-vcaret { width: 38px; height: 30px; }
.ic-vnet { width: 48px; height: 48px; margin-left: 26px; }
.ic-vsnd { width: 50px; height: 48px; margin-left: 23px; }
.clock { display: flex; flex-direction: column; align-items: center; font-size: 34px; line-height: 56px; letter-spacing: -.7px; white-space: nowrap; }
.clock-w { color: #fff; width: 190px; margin-left: 15px; }
.ic-vnote { width: 48px; height: 48px; margin-left: 44px; }

/* Status */
.vm-status { height: 60px; display: flex; align-items: center; background: #e2e4e6; font-size: 34px; letter-spacing: .15px; white-space: nowrap; }
.status-icons { margin-left: auto; display: flex; align-items: center; gap: 7px; padding-right: 59px; }
.ic-st { width: 46px; height: 46px; }
.ic-note { width: 42px; height: 42px; }
.st-sep { width: 2px; height: 56px; background: #b4b4b4; margin: 0 6px; }

/* Host taskbar */
.host-taskbar { height: 144px; border-top: 3px solid #b8b8bc; background: linear-gradient(90deg, #e8dfe0 0, #d8dfe9 450px, #d9dfe9 1000px, #e8dcdf 1750px, #dfdae3 2300px, #dcdde8 2700px, #dddce6 3840px); display: grid; grid-template-columns: 913px repeat(15, 132.4px) auto; align-items: start; }
.weather { position: relative; margin-left: 62px; margin-top: 14px; width: 80px; height: 82px; }
.ic-sun { width: 80px; height: 82px; }
.badge { position: absolute; left: 30px; top: 4px; width: 48px; height: 48px; border-radius: 50%; background: #c42b1c; color: #fff; font-size: 28px; display: flex; align-items: center; justify-content: center; }
.h-app { display: flex; flex-direction: column; align-items: center; padding-top: 33px; height: 141px; position: relative; }
.ic-host { width: 72px; height: 72px; }
.ic-teams { width: 86px; height: 80px; margin: -13px 0 0 14px; }
.dot::after { content: ""; position: absolute; left: 57px; top: 117px; width: 18px; height: 9px; border-radius: 5px; background: #857e7e; }
.h-tray { display: flex; align-items: center; height: 100px; padding-top: 24px; padding-left: 201px; }
.ic-hcaret { width: 32px; height: 30px; }
.ic-hsync { width: 48px; height: 50px; margin-left: 52px; }
.ic-hwifi { width: 50px; height: 46px; margin-left: 47px; }
.ic-hsnd { width: 50px; height: 46px; margin-left: 22px; }
.ic-hbat { width: 54px; height: 50px; margin-left: 31px; }
.clock-d { color: #1a1a1a; align-items: flex-end; width: 224px; line-height: 50px; font-size: 36px; margin-top: 8px; }
.ic-hbell { width: 44px; height: 62px; margin-left: 23px; }
.w-text { font: 700 34px "Liberation Sans", sans-serif; fill: #fff; text-anchor: middle; }
```
